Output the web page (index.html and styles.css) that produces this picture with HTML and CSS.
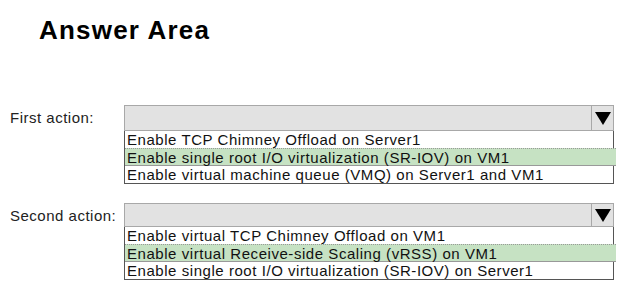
FILE: index.html
```html
<!DOCTYPE html>
<html>
<head>
  <title>Answer Area</title>
  <link rel="stylesheet" href="styles.css">
</head>
<body>
  <h1 class="title">Answer Area</h1>

  <div class="action first">
    <div class="label">First action:</div>
    <div class="dropdown">
      <div class="dropdown-head">
        <span class="arrow"></span>
      </div>
      <ul class="options">
        <li>Enable TCP Chimney Offload on Server1</li>
        <li class="picked">Enable single root I/O virtualization (SR-IOV) on VM1</li>
        <li>Enable virtual machine queue (VMQ) on Server1 and VM1</li>
      </ul>
    </div>
  </div>

  <div class="action second">
    <div class="label">Second action:</div>
    <div class="dropdown">
      <div class="dropdown-head">
        <span class="arrow"></span>
      </div>
      <ul class="options">
        <li>Enable virtual TCP Chimney Offload on VM1</li>
        <li class="picked">Enable virtual Receive-side Scaling (vRSS) on VM1</li>
        <li>Enable single root I/O virtualization (SR-IOV) on Server1</li>
      </ul>
    </div>
  </div>
</body>
</html>
```

FILE: styles.css
```css
body {
  font-family: "Liberation Sans", Arial, sans-serif;
  background-color: #fff;
  color: #111;
  margin: 0;
  padding: 0;
  width: 624px;
  height: 289px;
  overflow: hidden;
}

.title {
  margin: 0;
  padding: 15px 0 0 39px;
  font-size: 26px;
  line-height: 30px;
  letter-spacing: 1.2px;
  font-weight: bold;
  color: #000;
}

.action {
  display: flex;
  padding-left: 10px;
}

.action.first {
  margin-top: 60px;
}

.action.second {
  margin-top: 19px;
}

.label {
  width: 114px;
  font-size: 15px;
  line-height: 16px;
  letter-spacing: 0.5px;
  padding-top: 5px;
  color: #222;
}

.dropdown {
  width: 490px;
}

.dropdown-head {
  display: flex;
  justify-content: flex-end;
  height: 22px;
  background-color: #e2e2e2;
  border: 1px solid #a8a8a8;
}

.first .dropdown-head {
  height: 24px;
}

.arrow {
  width: 21px;
  border-left: 1px solid #a8a8a8;
  display: flex;
  align-items: center;
  justify-content: center;
}

.arrow::after {
  content: "";
  border-left: 8px solid transparent;
  border-right: 8px solid transparent;
  border-top: 13px solid #000;
}

.options {
  list-style: none;
  margin: 0;
  padding: 0;
  border: 1px solid #555;
  border-top: none;
}

.options li {
  height: 17px;
  font-size: 15px;
  line-height: 17px;
  letter-spacing: 0.55px;
  padding-left: 2px;
  color: #111;
  white-space: nowrap;
}

.options li.picked {
  background-color: #c6e2c3;
  border-top: 1px dotted #999;
  border-bottom: 1px solid #999;
  height: 16px;
  margin-right: -3px;
}
```
